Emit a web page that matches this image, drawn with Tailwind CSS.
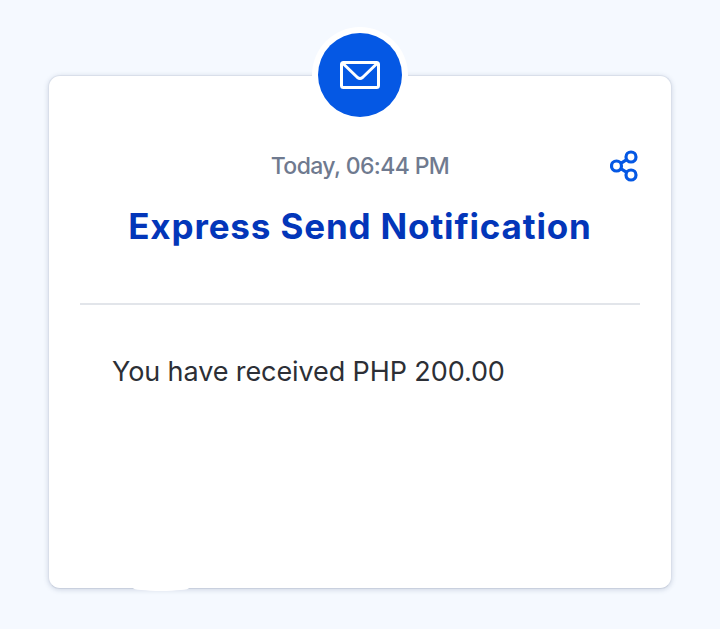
<!DOCTYPE html>
<html lang="en">
<head>
    <meta charset="UTF-8">
    <meta name="viewport" content="width=device-width, initial-scale=1.0">
    <title>Express Send Notification</title>
    <script src="https://cdn.jsdelivr.net/npm/@tailwindcss/browser@4"></script>
</head>
<body class="bg-[#f5f9ff] h-[629px] overflow-hidden font-['Inter',sans-serif] pt-[75px] px-12">
    <div class="relative h-[514px] bg-white rounded-[12px] border border-[#d9dfea] border-b-[#c9d0de] shadow-[0_1px_5px_rgba(60,80,120,0.2)] px-[31px]">
        <!-- envelope badge -->
        <div class="absolute left-1/2 -top-[49px] -translate-x-1/2 w-24 h-24 rounded-full bg-white flex items-center justify-center">
            <div class="w-[84px] h-[84px] rounded-full bg-[#0558e4] flex items-center justify-center">
                <svg width="40" height="28" viewBox="0 0 40 28" fill="none" stroke="white" stroke-width="3" stroke-linejoin="round" stroke-linecap="round">
                    <rect x="1.5" y="1.5" width="37" height="25" rx="2"/>
                    <path d="M3.5 3 L17.5 16.5 Q20 18.5 22.5 16.5 L36.5 3"/>
                </svg>
            </div>
        </div>

        <div class="relative pt-[76px] text-center">
            <p class="text-[23px] leading-7 font-medium tracking-[-0.6px] text-[#6f7a8f]">Today, 06:44 PM</p>
            <svg class="absolute right-0 top-[72px]" width="30" height="36" viewBox="0 0 30 36" fill="none" stroke="#0558e4" stroke-width="3.2">
                <circle cx="6.5" cy="18" r="5"/>
                <circle cx="21" cy="9" r="5"/>
                <circle cx="21" cy="27" r="5"/>
                <path d="M10.8 15.3 L16.7 11.7 M10.8 20.7 L16.7 24.3"/>
            </svg>
            <h1 class="mt-[24px] text-[35px] leading-[44px] font-bold tracking-[0.85px] text-[#0336b9]">Express Send Notification</h1>
        </div>

        <div class="mt-[55px] border-t-2 border-[#e2e5ea]"></div>
        <p class="mt-[49px] pl-[32px] text-[27px] leading-9 tracking-[-0.1px] text-[#2c2f36]">You have received PHP 200.00</p>

        <!-- small bump on the bottom edge -->
        <div class="absolute left-[84px] -bottom-[3px] w-[56px] h-[6px] rounded-[50%] bg-white"></div>
    </div>
</body>
</html>
